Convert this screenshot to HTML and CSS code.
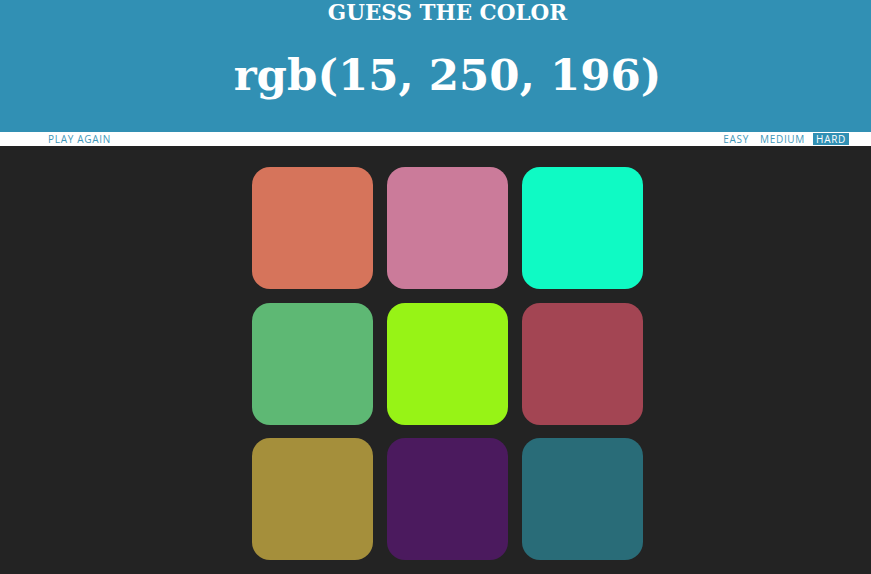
FILE: index.html
```html
<!DOCTYPE html>
<html>
<head>
<meta charset="utf-8">
<link rel="stylesheet" href="styles.css">
</head>
<body>
<header class="top">
  <div class="kicker">GUESS THE COLOR</div>
  <div class="rgb">rgb(15, 250, 196)</div>
</header>
<nav class="bar">
  <span class="btn">PLAY AGAIN</span>
  <span class="modes">
    <span class="btn">EASY</span>
    <span class="btn">MEDIUM</span>
    <span class="btn active">HARD</span>
  </span>
</nav>
<main class="grid">
  <div class="sq c1"></div>
  <div class="sq c2"></div>
  <div class="sq c3"></div>
  <div class="sq c4"></div>
  <div class="sq c5"></div>
  <div class="sq c6"></div>
  <div class="sq c7"></div>
  <div class="sq c8"></div>
  <div class="sq c9"></div>
</main>
</body>
</html>
```
FILE: styles.css
```css
html, body {
  margin: 0;
  padding: 0;
  background: #232323;
  height: 100%;
  overflow: hidden;
}
.top {
  background: #3190b4;
  color: #fff;
  text-align: center;
  font-family: "DejaVu Serif", serif;
  font-weight: bold;
  height: 132px;
  box-sizing: border-box;
  padding-top: 0;
}
.kicker {
  font-size: 21.5px;
  line-height: 26px;
  margin-left: 24px;
}
.rgb {
  font-size: 43.5px;
  line-height: 52px;
  margin-top: 23px;
  margin-left: 24px;
}
.bar {
  background: #fff;
  height: 14px;
  display: flex;
  justify-content: space-between;
  align-items: center;
  padding: 0 22px 0 45px;
  font-family: "Open Sans", sans-serif;
  font-size: 10px;
  letter-spacing: 0.7px;
  color: #4297b9;
}
.modes {
  display: flex;
  gap: 5px;
}
.btn {
  padding: 0 3px;
  line-height: 12px;
}
.active {
  background: #3190b4;
  color: #fff;
}
.grid {
  width: 391px;
  margin: 21px 0 0 calc(50% - 183.5px);
  display: grid;
  grid-template-columns: repeat(3, 121px);
  grid-auto-rows: 122px;
  column-gap: 14px;
  row-gap: 13.5px;
}
.sq { border-radius: 18px; }
.c1 { background: #d6745b; }
.c2 { background: #cb7b9a; }
.c3 { background: #0ffac4; }
.c4 { background: #5eb874; }
.c5 { background: #97f316; }
.c6 { background: #a34553; }
.c7 { background: #a58f3b; }
.c8 { background: #4b1a5e; }
.c9 { background: #296c78; }
```
